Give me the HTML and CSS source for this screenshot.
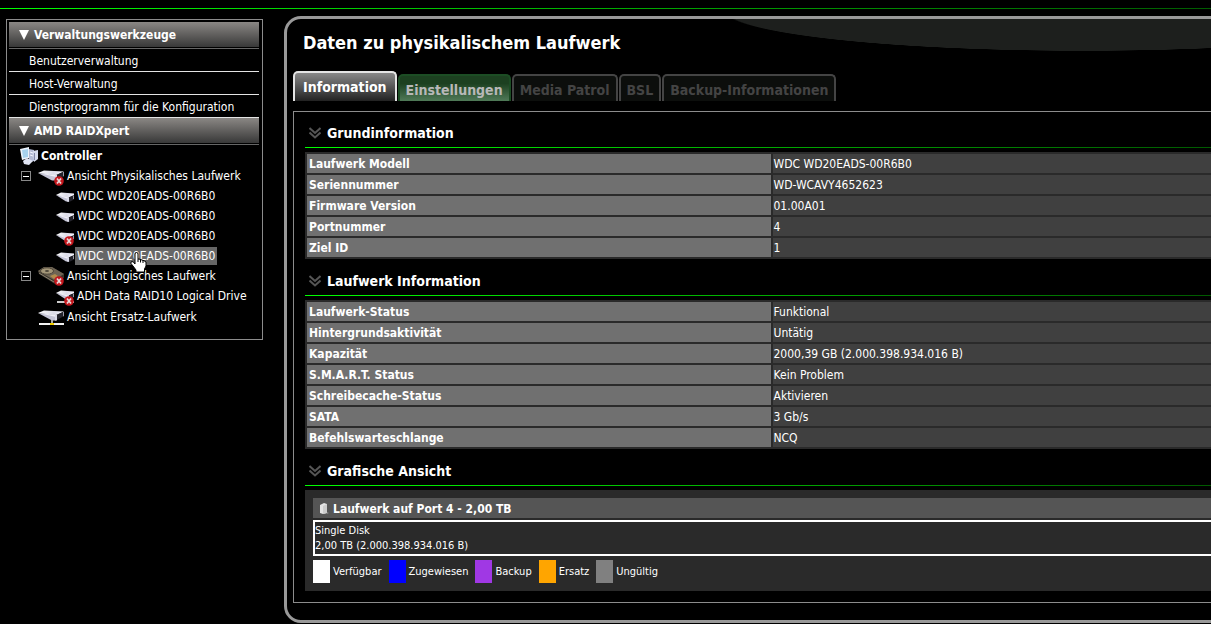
FILE: index.html
```html
<!DOCTYPE html>
<html lang="de">
<head>
  <meta charset="UTF-8">
  <meta name="viewport" content="width=device-width, initial-scale=1">
  <title>AMD RAIDXpert</title>
  <link rel="stylesheet" href="styles.css">
</head>
<body>
  <!-- Shared icons -->
  <svg class="sprite" aria-hidden="true">
    <defs>
      <linearGradient id="metal" x1="0" y1="0" x2="1" y2="0">
        <stop offset="0" stop-color="#ffffff"/>
        <stop offset="0.6" stop-color="#dcdce8"/>
        <stop offset="1" stop-color="#f6f6ff"/>
      </linearGradient>
      <symbol id="cross" viewBox="0 0 10 10">
        <circle cx="5" cy="5" r="4.8" fill="#c4161c"/>
        <path d="M3 2.5l4 5M7 2.5l-4 5" stroke="#e8d8d8" stroke-width="1.7"/>
      </symbol>
      <symbol id="disk" viewBox="0 0 18 12">
        <path d="M0 4l5-2.500 13 1v1.500l-6 3z" fill="url(#metal)"/>
        <path d="M0 4l12 2v4.500l-2 0z" fill="#c4c4d6"/>
        <path d="M1 4l11 2v2z" fill="#f0f0f8"/>
        <path d="M12 6.500l6-2v4l-5 2.500z" fill="#24242c"/>
        <path d="M11 6.500l2-.5v5l-2-.5z" fill="#dcdcea"/>
        <path d="M17 4.500h1v3.500h-1z" fill="#9a9aa8"/>
      </symbol>
      <symbol id="disk-wide" viewBox="0 0 26 14">
        <path d="M0 4l6-2.500 20 1-8 4z" fill="url(#metal)"/>
        <path d="M0 4l18 2v5.500l-4 0z" fill="#c4c4d6"/>
        <path d="M1 4l17 2v2z" fill="#f0f0f8"/>
        <path d="M18 6l8-3.500v4.500l-7 4z" fill="#24242c"/>
        <path d="M17 6l2-.5v6l-2 0z" fill="#dcdcea"/>
        <path d="M25 3h1v4l-1 .5z" fill="#9a9aa8"/>
      </symbol>
      <symbol id="chevrons" viewBox="0 0 12 12">
        <path d="M.5 1l5.500 5 5.500-5M.5 5.500l5.500 5 5.500-5" fill="none" stroke="#555" stroke-width="2"/>
      </symbol>
      <symbol id="arrow" viewBox="0 0 10 10">
        <path d="M0 0h10l-5 10z" fill="#fff"/>
      </symbol>
    </defs>
  </svg>

  <div class="page">
    <nav class="sidebar">
      <h2><svg class="arrow"><use href="#arrow"/></svg>Verwaltungswerkzeuge</h2>
      <ul class="tools">
        <li><a href="#">Benutzerverwaltung</a></li>
        <li><a href="#">Host-Verwaltung</a></li>
        <li><a href="#">Dienstprogramm für die Konfiguration</a></li>
      </ul>
      <h2><svg class="arrow"><use href="#arrow"/></svg>AMD RAIDXpert</h2>
      <ul class="tree">
        <li class="root">
          <svg class="icon-root" viewBox="0 0 18 18">
            <path d="M0 2l9-2v11l-7 2z" fill="#eef4fc"/>
            <path d="M2 3l6-1v8l-5 1z" fill="#a7d2ee"/>
            <path d="M9 2l5 1v11l-5 1z" fill="#b4bcd6"/>
            <path d="M13 4l5-1v9l-4 3z" fill="#d5dbed"/>
            <path d="M3 14l4-3 6 3-4 4-5-1z" fill="#dfe3f2"/>
            <path d="M10 5l3 1M10 8l3 1" stroke="#f4f6ff"/>
            <path d="M14.500 6v7" stroke="#8288a8"/>
          </svg>
          <a href="#">Controller</a>
        </li>
        <li class="view">
          <button class="toggle" aria-label="Zuklappen"></button>
          <svg class="icon-view" viewBox="0 0 27 20">
            <use href="#disk-wide" x="0" y="3" width="26" height="14"/>
            <use href="#cross" x="16" y="10" width="10" height="10"/>
          </svg>
          <a href="#">Ansicht Physikalisches Laufwerk</a>
        </li>
        <li class="drive">
          <svg class="icon-drive" viewBox="0 0 19 20"><use href="#disk" x="0" y="5" width="18" height="12"/></svg>
          <a href="#">WDC WD20EADS-00R6B0</a>
        </li>
        <li class="drive">
          <svg class="icon-drive" viewBox="0 0 19 20"><use href="#disk" x="0" y="5" width="18" height="12"/></svg>
          <a href="#">WDC WD20EADS-00R6B0</a>
        </li>
        <li class="drive">
          <svg class="icon-drive" viewBox="0 0 19 20">
            <use href="#disk" x="0" y="5" width="18" height="12"/>
            <use href="#cross" x="8" y="10" width="10" height="10"/>
          </svg>
          <a href="#">WDC WD20EADS-00R6B0</a>
        </li>
        <li class="drive">
          <svg class="icon-drive" viewBox="0 0 19 20"><use href="#disk" x="0" y="5" width="18" height="12"/></svg>
          <a class="selected" href="#">WDC WD20EADS-00R6B0</a>
          <svg class="cursor" viewBox="0 0 17 21">
            <path d="M5 10V2q0-1.500 1.500-1.500T8 2v5l2 .3 2 .7 2 .7 2 1.300v4l-1.500 3v3H6v-2L3 14 1 11.500Q.5 9.500 2 9.500t3 2.500z" fill="#fff" stroke="#000"/>
            <path d="M8 7v3M10.500 7.500v3M13 8v3" stroke="#000"/>
          </svg>
        </li>
        <li class="view">
          <button class="toggle" aria-label="Zuklappen"></button>
          <svg class="icon-view" viewBox="0 0 27 20">
            <path d="M0 5l6-4h8l12 7v4l-9 6L1 8z" fill="#3a352d"/>
            <path d="M0 5l6-4h8l12 7-10 6z" fill="#6e6454"/>
            <ellipse cx="9" cy="5" rx="6.500" ry="3.200" fill="#a39678" stroke="#4e4639"/>
            <ellipse cx="9" cy="5" rx="2" ry="1" fill="#4e4639"/>
            <path d="M12 10l5-2 3 2-4 3z" fill="#b18b4d"/>
            <path d="M1 7l15 9" stroke="#8c826e"/>
            <use href="#cross" x="16" y="10" width="10" height="10"/>
          </svg>
          <a href="#">Ansicht Logisches Laufwerk</a>
        </li>
        <li class="drive">
          <svg class="icon-drive" viewBox="0 0 19 20">
            <use href="#disk" x="0" y="3" width="18" height="12"/>
            <path d="M1 16h17" stroke="#ccc" stroke-width="2"/>
            <use href="#cross" x="8" y="10" width="10" height="10"/>
          </svg>
          <a href="#">ADH Data RAID10 Logical Drive</a>
        </li>
        <li class="view spare">
          <svg class="icon-view" viewBox="0 0 27 20">
            <use href="#disk-wide" x="0" y="2" width="26" height="14"/>
            <path d="M1 17h25" stroke="#f2f2f2" stroke-width="2"/>
            <path d="M14 13v3" stroke="#aaa" stroke-width="2"/>
            <path d="M12 17h4" stroke="#f0cc00" stroke-width="2"/>
          </svg>
          <a href="#">Ansicht Ersatz-Laufwerk</a>
        </li>
      </ul>
    </nav>

    <main class="panel">
      <h1>Daten zu physikalischem Laufwerk</h1>
      <div class="tabs">
        <button class="tab active">Information</button>
        <button class="tab hover">Einstellungen</button>
        <button class="tab" disabled>Media Patrol</button>
        <button class="tab" disabled>BSL</button>
        <button class="tab" disabled>Backup-Informationen</button>
      </div>

      <div class="content">
        <section>
          <h3><svg class="chevrons"><use href="#chevrons"/></svg>Grundinformation</h3>
          <table>
            <tr><th scope="row">Laufwerk Modell</th><td>WDC WD20EADS-00R6B0</td></tr>
            <tr><th scope="row">Seriennummer</th><td>WD-WCAVY4652623</td></tr>
            <tr><th scope="row">Firmware Version</th><td>01.00A01</td></tr>
            <tr><th scope="row">Portnummer</th><td>4</td></tr>
            <tr><th scope="row">Ziel ID</th><td>1</td></tr>
          </table>
        </section>

        <section>
          <h3><svg class="chevrons"><use href="#chevrons"/></svg>Laufwerk Information</h3>
          <table>
            <tr><th scope="row">Laufwerk-Status</th><td>Funktional</td></tr>
            <tr><th scope="row">Hintergrundsaktivität</th><td>Untätig</td></tr>
            <tr><th scope="row">Kapazität</th><td>2000,39 GB (2.000.398.934.016 B)</td></tr>
            <tr><th scope="row">S.M.A.R.T. Status</th><td>Kein Problem</td></tr>
            <tr><th scope="row">Schreibecache-Status</th><td>Aktivieren</td></tr>
            <tr><th scope="row">SATA</th><td>3 Gb/s</td></tr>
            <tr><th scope="row">Befehlswarteschlange</th><td>NCQ</td></tr>
          </table>
        </section>

        <section>
          <h3><svg class="chevrons"><use href="#chevrons"/></svg>Grafische Ansicht</h3>
          <div class="graphic">
            <h4>
              <svg class="icon-port" viewBox="0 0 10 12">
                <path d="M1 2l4-2 3 1v9l-4 1-3-1z" fill="#e4e4e4"/>
                <path d="M4 3l4-2v9l-4 1z" fill="#ccc"/>
                <path d="M8 9l2 1-2 1z" fill="#888"/>
              </svg>
              Laufwerk auf Port 4 - 2,00 TB
            </h4>
            <div class="disk">Single Disk<br>2,00 TB (2.000.398.934.016 B)</div>
            <ul class="legend">
              <li><i class="free"></i>Verfügbar</li>
              <li><i class="assigned"></i>Zugewiesen</li>
              <li><i class="backup"></i>Backup</li>
              <li><i class="spare-disk"></i>Ersatz</li>
              <li><i class="invalid"></i>Ungültig</li>
            </ul>
          </div>
        </section>
      </div>
    </main>
  </div>
</body>
</html>
```
FILE: styles.css
```css
* {
  box-sizing: border-box;
}
body {
  margin: 0;
  background: #000;
  color: #fff;
  font-family: Tahoma, "DejaVu Sans Condensed", "DejaVu Sans", sans-serif;
  font-size: 12px;
  overflow-x: hidden;
}
h1, h2, h3, h4, ul {
  margin: 0;
  padding: 0;
}
ul {
  list-style: none;
}
a {
  color: #fff;
  text-decoration: none;
}
.sprite {
  position: absolute;
  width: 0;
  height: 0;
}
.page {
  display: flex;
  align-items: flex-start;
  gap: 21px;
  padding: 8px 0 0 6px;
  margin-top: 8px;
  margin-right: -54px;
  background: linear-gradient(to right, #0f0, #050) 0 0 / 100% 1px no-repeat;
}

/* Sidebar */
.sidebar {
  flex: 0 0 257px;
  margin-top: 3px;
  padding: 2px 3px 12px 2px;
  border: 1px solid #8c8c8c;
}
.sidebar h2 {
  display: flex;
  align-items: center;
  gap: 5px;
  height: 27px;
  padding-left: 10px;
  background: linear-gradient(#8a8784, #383838) 0 0 / 100% 25px no-repeat;
  border-bottom: 1px solid #666;
  font-size: 12px;
}
.arrow {
  width: 10px;
  height: 10px;
}
.tools li {
  height: 23px;
  padding-left: 20px;
  border-bottom: 1px solid #e4e4e4;
  line-height: 24px;
}
.tree {
  padding-top: 1px;
}
.tree li {
  display: flex;
  align-items: center;
  height: 20px;
}
.tree .root {
  padding-left: 11px;
  gap: 3px;
  font-weight: bold;
}
.view {
  padding-left: 12px;
}
.tree .spare {
  height: 21px;
  padding-left: 29px;
}
.drive {
  padding-left: 47px;
}
.toggle {
  width: 10px;
  height: 10px;
  margin-right: 7px;
  padding: 0;
  border: 1px solid #888;
  background: linear-gradient(#fff, #fff) center / 6px 1px no-repeat #000;
}
.icon-root {
  width: 18px;
  height: 18px;
}
.icon-view {
  width: 27px;
  height: 20px;
  margin-right: 2px;
}
.icon-drive {
  width: 19px;
  height: 20px;
}
.drive a {
  padding: 0 2px;
  line-height: 18px;
}
.drive .selected {
  background: #666;
}
.drive:has(.cursor) {
  position: relative;
}
.cursor {
  position: absolute;
  left: 121px;
  top: 6px;
  width: 17px;
  height: 21px;
}

/* Main panel */
.panel {
  flex: 1;
  padding: 0 12px 17px 6px;
  border: 3px solid #999;
  border-radius: 17px;
  background: radial-gradient(ellipse 360px 41px at 796px -9px, #1d1f1d 99%, transparent 100%) no-repeat;
}
.panel h1 {
  padding: 12px 10px 16px;
  font-size: 18px;
  line-height: 24px;
}
.tabs {
  display: flex;
  align-items: flex-end;
  gap: 1px;
  margin-bottom: 10px;
}
.tab {
  height: 27px;
  padding: 2px 6px 0;
  border: 2px solid #444;
  border-bottom: 0;
  border-radius: 5px 5px 0 0;
  background: #0c0e0c;
  color: #444;
  font: bold 14px Tahoma, "DejaVu Sans Condensed", "DejaVu Sans", sans-serif;
  white-space: nowrap;
}
.tab.active {
  height: 30px;
  padding: 0 8px;
  border-color: #e4e4e4;
  background: linear-gradient(#888, #222);
  color: #fff;
}
.tab.hover {
  border-color: #1c4d24;
  background: linear-gradient(#1c4020 30%, #507a58);
  color: #b8b8b8;
}
.content {
  padding: 6px 11px 11px;
  border: 1px solid #8c8c8c;
}
.content h3 {
  display: flex;
  align-items: center;
  gap: 6px;
  height: 30px;
  padding-left: 4px;
  margin-bottom: 4px;
  background: linear-gradient(to right, #0f0, #050) 0 100% / 100% 1px no-repeat;
  font-size: 14px;
}
.chevrons {
  width: 12px;
  height: 12px;
}
section + section {
  padding-top: 7px;
}
table {
  width: 100%;
  table-layout: fixed;
  border-spacing: 2px;
  background: #2a2a2a;
}
th, td {
  width: 50%;
  height: 19px;
  padding: 2px 1px 0;
  background: #404040;
  line-height: 17px;
  text-align: left;
}
th {
  padding: 2px 2px 0;
  background: #707070;
}
.graphic {
  padding: 8px;
  background: #2a2a2a;
}
.graphic h4 {
  display: flex;
  align-items: center;
  gap: 4px;
  height: 20px;
  padding: 2px 0 0 6px;
  margin-bottom: 2px;
  background: #555;
  font-size: 12px;
}
.icon-port {
  width: 10px;
  height: 12px;
}
.disk {
  padding: 1px 0;
  border: 2px solid #fff;
  font-size: 11px;
  line-height: 15px;
}
.legend {
  display: flex;
  gap: 7px;
  margin-top: 4px;
  font-size: 11px;
}
.legend li {
  display: flex;
  align-items: center;
  gap: 3px;
}
.legend i {
  width: 17px;
  height: 23px;
}
.free {
  background: #fff;
}
.assigned {
  background: #00f;
}
.backup {
  background: #a038e4;
}
.spare-disk {
  background: #ffa500;
}
.invalid {
  background: #808080;
}
```
